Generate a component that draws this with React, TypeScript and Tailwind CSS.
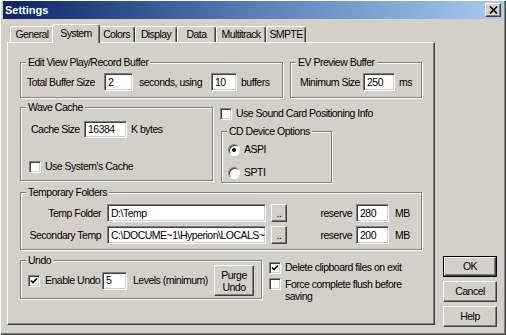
import React from "react";

function Field({ w, value, h = "h-[18px]" }: { w: string; value: string; h?: string }) {
  return (
    <div
      className={`${w} ${h} shrink-0 bg-white border border-t-[#808080] border-l-[#808080] border-r-white border-b-white shadow-[inset_1px_1px_0_#404040,inset_-1px_-1px_0_#d4d0c8] flex items-center pl-[3px] overflow-hidden whitespace-nowrap text-black`}
    >
      {value}
    </div>
  );
}

function Check({ checked = false }: { checked?: boolean }) {
  return (
    <div className="w-[12px] h-[12px] shrink-0 bg-white border border-t-[#808080] border-l-[#808080] border-r-white border-b-white shadow-[inset_1px_1px_0_#404040,inset_-1px_-1px_0_#d4d0c8] flex items-center justify-center">
      {checked && (
        <svg width="8" height="8" viewBox="0 0 8 8">
          <path d="M1 3.5 L3 5.5 L7 1.5" stroke="#000" strokeWidth="1.6" fill="none" />
        </svg>
      )}
    </div>
  );
}

function Radio({ checked = false }: { checked?: boolean }) {
  return (
    <div className="w-[12px] h-[12px] shrink-0 rounded-full bg-white border border-t-[#808080] border-l-[#808080] border-r-white border-b-white shadow-[inset_1px_1px_0_#404040] flex items-center justify-center">
      {checked && <div className="w-[4px] h-[4px] rounded-full bg-black" />}
    </div>
  );
}

function Group({
  label,
  className,
  children,
}: {
  label: string;
  className: string;
  children?: React.ReactNode;
}) {
  return (
    <div className={`relative shrink-0 border border-[#808080] shadow-[1px_1px_0_#fff,inset_1px_1px_0_#fff] ${className}`}>
      <span className="absolute left-[5px] top-[-8px] px-[2px] bg-[#d4d0c8] leading-[14px] whitespace-nowrap">
        {label}
      </span>
      {children}
    </div>
  );
}

function Btn({ className, children }: { className: string; children: React.ReactNode }) {
  return (
    <div
      className={`shrink-0 bg-[#d4d0c8] border border-t-white border-l-white border-r-[#404040] border-b-[#404040] shadow-[inset_-1px_-1px_0_#808080] flex items-center justify-center text-center ${className}`}
    >
      {children}
    </div>
  );
}

function Tab({ w, label, selected = false }: { w: string; label: string; selected?: boolean }) {
  return (
    <div
      className={`${w} shrink-0 bg-[#d4d0c8] border-t border-l border-r border-t-white border-l-white border-r-[#404040] shadow-[inset_-1px_0_0_#808080] rounded-t-[3px] flex items-center justify-center whitespace-nowrap overflow-hidden text-[10.5px] tracking-[-0.6px] ${
        selected ? "h-[19px] -mx-[2px] -mb-[1px] relative z-10 pb-[2px]" : "h-[16px]"
      }`}
    >
      {label}
    </div>
  );
}

export default function App() {
  return (
    <div className="w-[506px] h-[335px] bg-[#d4d0c8] shadow-[inset_1px_1px_0_#fff,inset_-1px_-1px_0_#404040,inset_-2px_-2px_0_#808080] flex flex-col font-['Liberation_Sans',Arial,sans-serif] text-[10.5px] tracking-[-0.5px] text-black leading-[13px] whitespace-nowrap overflow-hidden">
      {/* Title bar */}
      <div className="mt-[1px] mx-[3px] h-[18px] bg-gradient-to-r from-[#0a246a] via-[#5a7eb8] to-[#a6caf0] flex items-center justify-between pl-[2px] pr-[2px]">
        <span className="text-white font-bold text-[11px] tracking-normal">Settings</span>
        <div className="w-[16px] h-[14px] bg-[#d4d0c8] border border-t-white border-l-white border-r-[#404040] border-b-[#404040] shadow-[inset_-1px_-1px_0_#808080] flex items-center justify-center">
          <svg width="9" height="8" viewBox="0 0 9 8">
            <path d="M1 0.5 L8 7.5 M8 0.5 L1 7.5" stroke="#000" strokeWidth="1.6" fill="none" />
          </svg>
        </div>
      </div>

      {/* Body */}
      <div className="flex pl-[7px] pt-[5px]">
        {/* Left: tabs + panel */}
        <div className="w-[428px] flex flex-col">
          <div className="h-[18px] flex items-end pl-[3px]">
            <Tab w="w-[44px]" label="General" />
            <Tab w="w-[48px]" label="System" selected />
            <Tab w="w-[37px]" label="Colors" />
            <Tab w="w-[42px]" label="Display" />
            <Tab w="w-[39px]" label="Data" />
            <Tab w="w-[50px]" label="Multitrack" />
            <Tab w="w-[40px]" label="SMPTE" />
          </div>
          <div className="h-[283px] border border-t-white border-l-white border-r-[#404040] border-b-[#404040] shadow-[inset_-1px_-1px_0_#808080] pl-[12px] pt-[19px] flex flex-col">
            {/* Row 1 */}
            <div className="flex gap-[7px]">
              <Group label="Edit View Play/Record Buffer" className="w-[263px] h-[36px] flex items-center pl-[6px] pt-[4px]">
                <span className="w-[77px] shrink-0">Total Buffer Size</span>
                <Field w="w-[29px]" value="2" />
                <span className="w-[78px] shrink-0 pl-[6px]">seconds, using</span>
                <Field w="w-[26px]" value="10" />
                <span className="pl-[4px]">buffers</span>
              </Group>
              <Group label="EV Preview Buffer" className="w-[132px] h-[36px] flex items-center pl-[9px] pt-[4px]">
                <span className="w-[63px] shrink-0">Minimum Size</span>
                <Field w="w-[32px]" value="250" />
                <span className="pl-[4px]">ms</span>
              </Group>
            </div>

            {/* Row 2 */}
            <div className="flex gap-[7px] mt-[9px] items-start">
              <Group label="Wave Cache" className="w-[193px] h-[74px] flex flex-col pl-[10px] pt-[13px]">
                <div className="flex items-center h-[17px]">
                  <span className="w-[53px] shrink-0">Cache Size</span>
                  <Field w="w-[43px]" h="h-[17px]" value="16384" />
                  <span className="pl-[4px]">K bytes</span>
                </div>
                <div className="flex items-center gap-[4px] mt-[22px] -ml-[2px]">
                  <Check />
                  <span>Use System's Cache</span>
                </div>
              </Group>
              <div className="flex flex-col">
                <div className="flex items-center gap-[4px]">
                  <Check />
                  <span>Use Sound Card Positioning Info</span>
                </div>
                <Group label="CD Device Options" className="w-[111px] h-[52px] mt-[11px] ml-[1px] flex flex-col pl-[6px] pt-[11px] gap-[10px]">
                  <div className="flex items-center gap-[4px]">
                    <Radio checked />
                    <span>ASPI</span>
                  </div>
                  <div className="flex items-center gap-[4px]">
                    <Radio />
                    <span>SPTI</span>
                  </div>
                </Group>
              </div>
            </div>

            {/* Row 3 */}
            <Group label="Temporary Folders" className="w-[402px] h-[58px] mt-[9px] flex flex-col pt-[11px] gap-[4px]">
              <div className="flex items-center h-[18px]">
                <span className="w-[80px] shrink-0 text-right">Temp Folder</span>
                <div className="ml-[6px]">
                  <Field w="w-[159px]" value="D:\Temp" />
                </div>
                <Btn className="ml-[5px] w-[16px] h-[18px] leading-[10px]">..</Btn>
                <span className="w-[69px] shrink-0 text-right pr-[4px]">reserve</span>
                <Field w="w-[33px]" value="280" />
                <span className="pl-[6px]">MB</span>
              </div>
              <div className="flex items-center h-[18px]">
                <span className="w-[80px] shrink-0 text-right">Secondary Temp</span>
                <div className="ml-[6px]">
                  <Field w="w-[159px]" value="C:\DOCUME~1\Hyperion\LOCALS~" />
                </div>
                <Btn className="ml-[5px] w-[16px] h-[18px] leading-[10px]">..</Btn>
                <span className="w-[69px] shrink-0 text-right pr-[4px]">reserve</span>
                <Field w="w-[33px]" value="200" />
                <span className="pl-[6px]">MB</span>
              </div>
            </Group>

            {/* Row 4 */}
            <div className="flex gap-[7px] mt-[10px] items-start">
              <Group label="Undo" className="w-[242px] h-[39px] flex items-center pl-[7px] pt-[2px]">
                <Check checked />
                <span className="w-[62px] shrink-0 pl-[5px]">Enable Undo</span>
                <Field w="w-[25px]" value="5" />
                <span className="w-[87px] shrink-0 pl-[6px]">Levels (minimum)</span>
                <Btn className="w-[40px] h-[31px] leading-[12px]">
                  Purge
                  <br />
                  Undo
                </Btn>
              </Group>
              <div className="flex flex-col pt-[1px]">
                <div className="flex items-center gap-[4px]">
                  <Check checked />
                  <span>Delete clipboard files on exit</span>
                </div>
                <div className="flex items-start gap-[4px] mt-[4px]">
                  <Check />
                  <span className="w-[130px] leading-[12px] whitespace-normal">Force complete flush before saving</span>
                </div>
              </div>
            </div>
          </div>
        </div>

        {/* Right: buttons */}
        <div className="ml-[8px] w-[54px] flex flex-col gap-[4px] pt-[232px]">
          <div className="border border-black">
            <Btn className="h-[19px]">OK</Btn>
          </div>
          <Btn className="h-[21px]">Cancel</Btn>
          <Btn className="h-[21px]">Help</Btn>
        </div>
      </div>
    </div>
  );
}
